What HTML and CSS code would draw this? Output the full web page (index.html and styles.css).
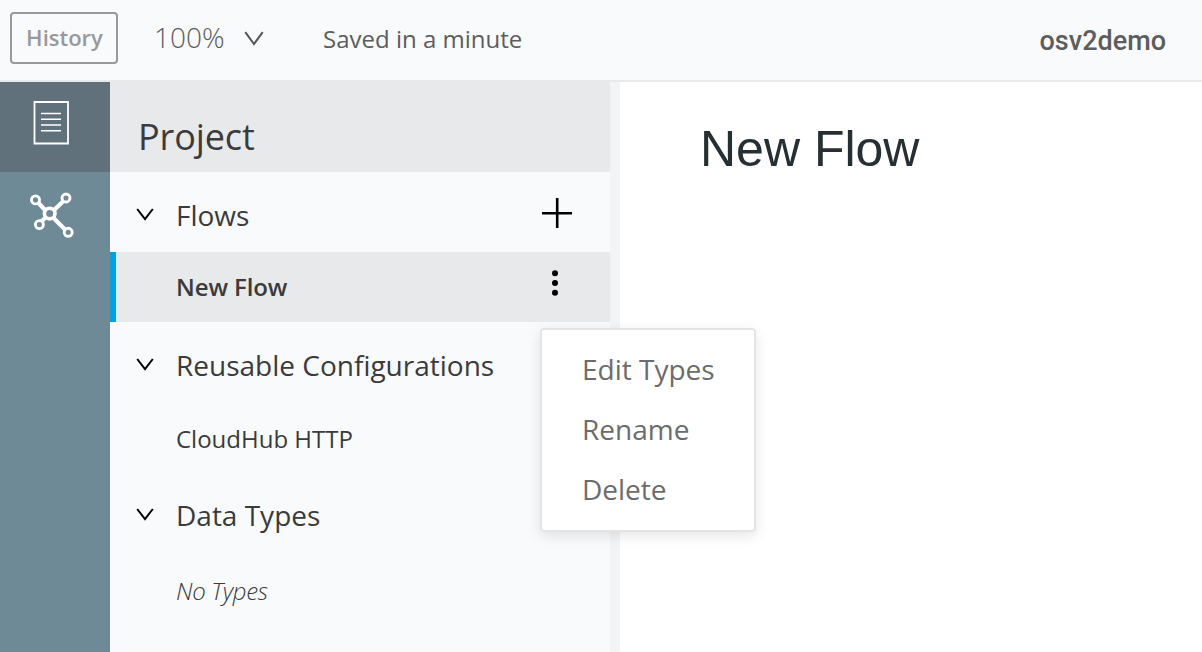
FILE: index.html
```html
<!DOCTYPE html>
<html lang="en">
<head>
<meta charset="utf-8">
<title>osv2demo</title>
<link rel="stylesheet" href="styles.css">
</head>
<body>
<header class="topbar">
  <button class="history">History</button>
  <div class="zoom"><span class="zoom-value">100%</span>
    <svg class="zoom-arrow" width="20" height="16" viewBox="0 0 20 16"><path d="M1.300 1.200 10 13 18.700 1.200" fill="none" stroke="#555658" stroke-width="2"/></svg>
  </div>
  <span class="saved">Saved in a minute</span>
  <span class="app-name">osv2demo</span>
</header>
<div class="workspace">
  <nav class="rail">
    <a class="rail-item rail-item-active">
      <svg width="36" height="44" viewBox="0 0 36 44" fill="none" stroke="#fff"><path d="M1.500 1H35V42.500H1.500Z" stroke-width="1.800"/><path d="M8 12.500H28M8 18.300H28M8 24H28M8 29.800H28" stroke-width="1.600"/></svg>
    </a>
    <a class="rail-item">
      <svg class="graph" width="46" height="46" viewBox="0 0 46 46" fill="none" stroke="#fff"><path d="M9 10.500 16.500 18.500M34.500 9 24.500 18.500M16.500 25.500 12.500 29.500M24.500 26 36.500 38" stroke-width="4.200"/><circle cx="20.700" cy="21.600" r="5.300" stroke-width="3.600"/><circle cx="6.500" cy="7.900" r="4" stroke-width="2.900"/><circle cx="37" cy="6" r="4" stroke-width="2.900"/><circle cx="10.400" cy="32.600" r="4" stroke-width="2.900"/><circle cx="39.200" cy="40.300" r="4" stroke-width="2.900"/></svg>
    </a>
  </nav>
  <aside class="project">
    <h2 class="project-title">Project</h2>
    <div class="section">
      <svg class="caret" width="18" height="14" viewBox="0 0 18 14"><path d="M1.200 1 9 11.200 16.800 1" fill="none" stroke="#000" stroke-width="2"/></svg>
      <span class="label">Flows</span>
      <svg class="add" width="30" height="30" viewBox="0 0 30 30"><path d="M0 15.200H30M15.200 0V30" stroke="#000" stroke-width="2.600"/></svg>
    </div>
    <div class="item item-selected">
      <span class="label">New Flow</span>
      <svg class="dots" width="6" height="26" viewBox="0 0 6 26"><circle cx="3" cy="3.200" r="3"/><circle cx="3" cy="13" r="3"/><circle cx="3" cy="22.800" r="3"/></svg>
      <div class="menu">
        <span class="menu-item">Edit Types</span>
        <span class="menu-item">Rename</span>
        <span class="menu-item">Delete</span>
      </div>
    </div>
    <div class="section">
      <svg class="caret" width="18" height="14" viewBox="0 0 18 14"><path d="M1.200 1 9 11.200 16.800 1" fill="none" stroke="#000" stroke-width="2"/></svg>
      <span class="label">Reusable Configurations</span>
    </div>
    <div class="item item-config"><span class="label">CloudHub HTTP</span></div>
    <div class="section">
      <svg class="caret" width="18" height="14" viewBox="0 0 18 14"><path d="M1.200 1 9 11.200 16.800 1" fill="none" stroke="#000" stroke-width="2"/></svg>
      <span class="label">Data Types</span>
    </div>
    <div class="item item-empty"><span class="label">No Types</span></div>
  </aside>
  <main class="canvas"><h1 class="flow-title">New Flow</h1></main>
</div>
</body>
</html>
```
FILE: styles.css
```css
* { box-sizing: border-box; }
body {
  margin: 0;
  height: 652px;
  overflow: hidden;
  display: flex;
  flex-direction: column;
  background: #fff;
  color: #3a3b3c;
  font-family: "Open Sans", "Noto Sans", sans-serif;
  white-space: nowrap;
}
svg { display: block; flex: none; }
.topbar {
  flex: none;
  height: 82px;
  display: flex;
  align-items: flex-start;
  padding: 12px 36px 0 10px;
  background: #f9fafc;
  border-bottom: 2px solid #e8e9ea;
  color: #5c5d5f;
}
.history {
  width: 108px;
  height: 52px;
  padding: 0 0 2px 1px;
  border: 2px solid #98999b;
  border-radius: 4px;
  background: transparent;
  color: #98999b;
  font: 600 22px/46px "Open Sans", sans-serif;
}
.zoom { display: flex; margin-left: 36px; width: 169px; }
.zoom-value { font-size: 28px; font-weight: 300; line-height: 50px; width: 90px; }
.zoom-arrow { margin-top: 19px; }
.saved { font-size: 24px; line-height: 54px; }
.app-name {
  margin-left: auto;
  font: 500 27px/58px Roboto, sans-serif;
}
.workspace { flex: 1; display: flex; min-height: 0; }
.rail { width: 110px; background: #6d8a96; }
.rail-item { display: flex; height: 90px; padding: 19px 0 0 33px; }
.rail-item-active { background: #60717b; }
.rail-item .graph { margin: 1px 0 0 -4px; }
.project {
  width: 510px;
  background: #f9fafc;
  border-right: 10px solid #f3f4f6;
}
.project-title {
  margin: 0;
  height: 90px;
  padding: 20px 0 0 28px;
  background: #e8e9ea;
  font-size: 36px;
  font-weight: 400;
  line-height: 70px;
  letter-spacing: -.1px;
}
.section {
  display: flex;
  height: 80px;
  padding: 6px 38px 0 26px;
  font-size: 28px;
  line-height: 74px;
}
.caret { margin: 30px 22px 0 0; }
.add { margin: 20px 0 0 auto; }
.item {
  position: relative;
  display: flex;
  height: 70px;
  padding-left: 66px;
  font-size: 24px;
  line-height: 70px;
}
.item-selected {
  padding: 0 52px 0 60px;
  border-left: 6px solid #00a2df;
  background: #e8e9ea;
  font-weight: 600;
}
.item-selected > .label { letter-spacing: -.1px; }
.dots { margin: 18px 0 0 auto; }
.item-config { line-height: 74px; }
.item-empty { font-weight: 300; font-style: italic; line-height: 78px; letter-spacing: -.3px; }
.menu {
  position: absolute;
  z-index: 1;
  left: 424px;
  top: 76px;
  width: 216px;
  height: 204px;
  padding: 9px 0 11px 40px;
  display: flex;
  flex-direction: column;
  background: #fff;
  border: 2px solid #e4e4e4;
  border-radius: 4px;
  box-shadow: 0 4px 14px rgba(0, 0, 0, .1);
  color: #6b6c6e;
  font-size: 28px;
  font-weight: 400;
}
.menu-item { height: 60px; line-height: 60px; }
.canvas { flex: 1; padding: 38px 0 0 80px; }
.flow-title {
  margin: 0;
  color: #262f33;
  font: 400 50px/58px "Liberation Sans", Arial, sans-serif;
}
```
